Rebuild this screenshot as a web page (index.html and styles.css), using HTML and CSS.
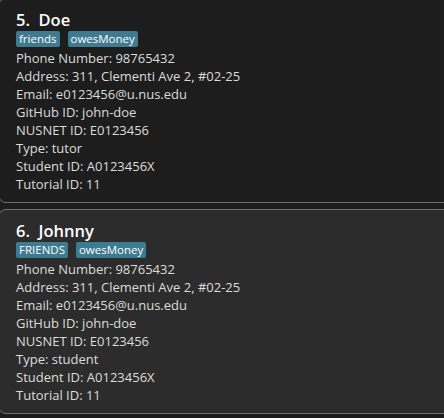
FILE: index.html
```html
<!DOCTYPE html>
<html>
<head>
<meta charset="utf-8">
<link rel="stylesheet" href="styles.css">
</head>
<body>
<div class="list">
  <div class="card">
    <div class="name">5.&nbsp;&nbsp;Doe</div>
    <div class="tags"><span class="tag">friends</span><span class="tag">owesMoney</span></div>
    <div class="field">Phone Number: 98765432</div>
    <div class="field">Address: 311, Clementi Ave 2, #02-25</div>
    <div class="field">Email: e0123456@u.nus.edu</div>
    <div class="field">GitHub ID: john-doe</div>
    <div class="field">NUSNET ID: E0123456</div>
    <div class="field">Type: tutor</div>
    <div class="field">Student ID: A0123456X</div>
    <div class="field">Tutorial ID: 11</div>
  </div>
  <div class="card selected">
    <div class="name">6.&nbsp;&nbsp;Johnny</div>
    <div class="tags"><span class="tag">FRIENDS</span><span class="tag">owesMoney</span></div>
    <div class="field">Phone Number: 98765432</div>
    <div class="field">Address: 311, Clementi Ave 2, #02-25</div>
    <div class="field">Email: e0123456@u.nus.edu</div>
    <div class="field">GitHub ID: john-doe</div>
    <div class="field">NUSNET ID: E0123456</div>
    <div class="field">Type: student</div>
    <div class="field">Student ID: A0123456X</div>
    <div class="field">Tutorial ID: 11</div>
  </div>
</div>
</body>
</html>
```
FILE: styles.css
```css
html, body {
  margin: 0;
  padding: 0;
  background: #1d1d1d;
  width: 444px;
  height: 418px;
  overflow: hidden;
  font-family: "Open Sans", sans-serif;
}
.list {
  display: flex;
  flex-direction: column;
  gap: 6px;
  margin-top: -2px;
  margin-left: -2px;
  width: 460px;
}
.card {
  border: 1px solid #6f6f6f;
  border-radius: 8px;
  background: #1d1d1d;
  padding: 11px 0 9px 17px;
}
.card.selected {
  background: #2c2c2c;
}
.name {
  color: #ffffff;
  font-weight: 600;
  font-size: 16.5px;
  line-height: 20px;
}
.tags {
  display: flex;
  gap: 8px;
  margin-top: 1px;
  margin-bottom: 2px;
}
.tag {
  background: #3e7b91;
  color: #ffffff;
  font-size: 11.5px;
  line-height: 16px;
  height: 16px;
  padding: 0 3px;
  border-radius: 2px;
}
.field {
  color: #dcdcdc;
  font-size: 13px;
  line-height: 18px;
}
```
